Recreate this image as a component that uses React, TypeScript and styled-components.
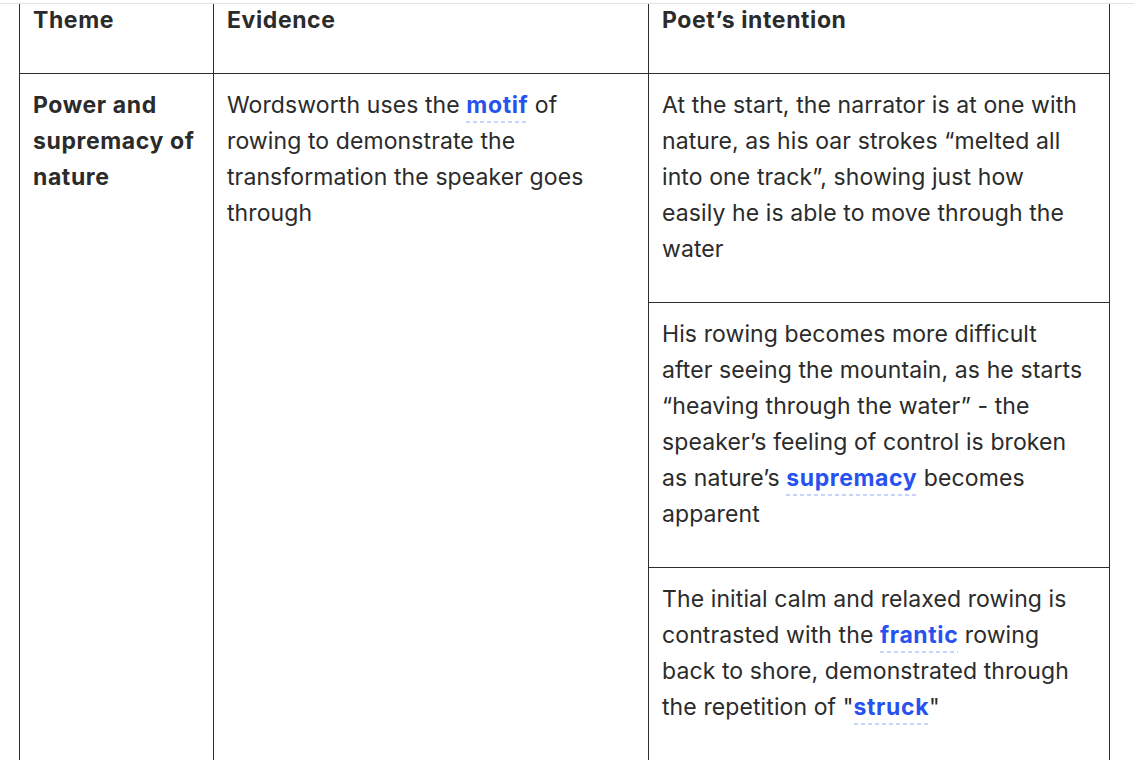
import styled, { createGlobalStyle } from 'styled-components';

const GlobalStyle = createGlobalStyle`
  html, body {
    margin: 0;
    padding: 0;
    background: #ffffff;
  }
  body {
    font-family: Inter, "Noto Sans", sans-serif;
    color: #2b2b2b;
  }
`;

const Page = styled.div`
  height: 760px;
  overflow: hidden;
  background: #fff;
`;

const TopBar = styled.div`
  height: 3px;
  border-bottom: 1px solid #e4e4e4;
  position: relative;
  z-index: 1;
  background: #fff;
`;

const Section = styled.section`
  margin-top: -16px;
  padding-left: 19px;
`;

const Table = styled.table`
  border-collapse: collapse;
  table-layout: fixed;
  width: 1090px;
  font-size: 23px;
  line-height: 36px;
  letter-spacing: 0.1px;
`;

const HeadCell = styled.th`
  border: 1px solid #2e2e2e;
  text-align: left;
  vertical-align: top;
  font-weight: 700;
  letter-spacing: 0.6px;
  padding: 13px 17px 0 13px;
`;

const Cell = styled.td<{ $strong?: boolean }>`
  border: 1px solid #2e2e2e;
  vertical-align: top;
  padding: 13px 17px 0 13px;
  font-weight: ${(p) => (p.$strong ? 700 : 400)};
  letter-spacing: ${(p) => (p.$strong ? '0.6px' : '0.1px')};
`;

const Para = styled.p`
  margin: 0 0 35px;
`;

const Term = styled.a`
  color: #2852f0;
  font-weight: 700;
  letter-spacing: 0.6px;
  text-decoration: none;
  padding-bottom: 4px;
  background-image: linear-gradient(to right, #c9d4fa 0 4px, transparent 4px 7px);
  background-size: 7px 2px;
  background-repeat: repeat-x;
  background-position: 0 100%;
`;

function App() {
  return (
    <Page>
      <GlobalStyle />
      <TopBar />
      <Section>
        <Table>
          <colgroup>
            <col style={{ width: 194 }} />
            <col style={{ width: 435 }} />
            <col style={{ width: 461 }} />
          </colgroup>
          <thead>
            <tr>
              <HeadCell><Para>Theme</Para></HeadCell>
              <HeadCell><Para>Evidence</Para></HeadCell>
              <HeadCell><Para>Poet’s intention</Para></HeadCell>
            </tr>
          </thead>
          <tbody>
            <tr>
              <Cell $strong rowSpan={3}>
                <Para>Power and supremacy of nature</Para>
              </Cell>
              <Cell rowSpan={3}>
                <Para>
                  Wordsworth uses the <Term>motif</Term> of rowing to demonstrate the transformation the speaker goes through
                </Para>
              </Cell>
              <Cell>
                <Para>
                  At the start, the narrator is at one with nature, as his oar strokes “melted all into one track”, showing just how easily he is able to move through the water
                </Para>
              </Cell>
            </tr>
            <tr>
              <Cell>
                <Para>
                  His rowing becomes more difficult after seeing the mountain, as he starts “heaving through the water” - the speaker’s feeling of control is broken as nature’s <Term>supremacy</Term> becomes apparent
                </Para>
              </Cell>
            </tr>
            <tr>
              <Cell>
                <Para>
                  The initial calm and relaxed rowing is contrasted with the <Term>frantic</Term> rowing back to shore, demonstrated through the repetition of "<Term>struck</Term>"
                </Para>
              </Cell>
            </tr>
          </tbody>
        </Table>
      </Section>
    </Page>
  );
}

export default App;
